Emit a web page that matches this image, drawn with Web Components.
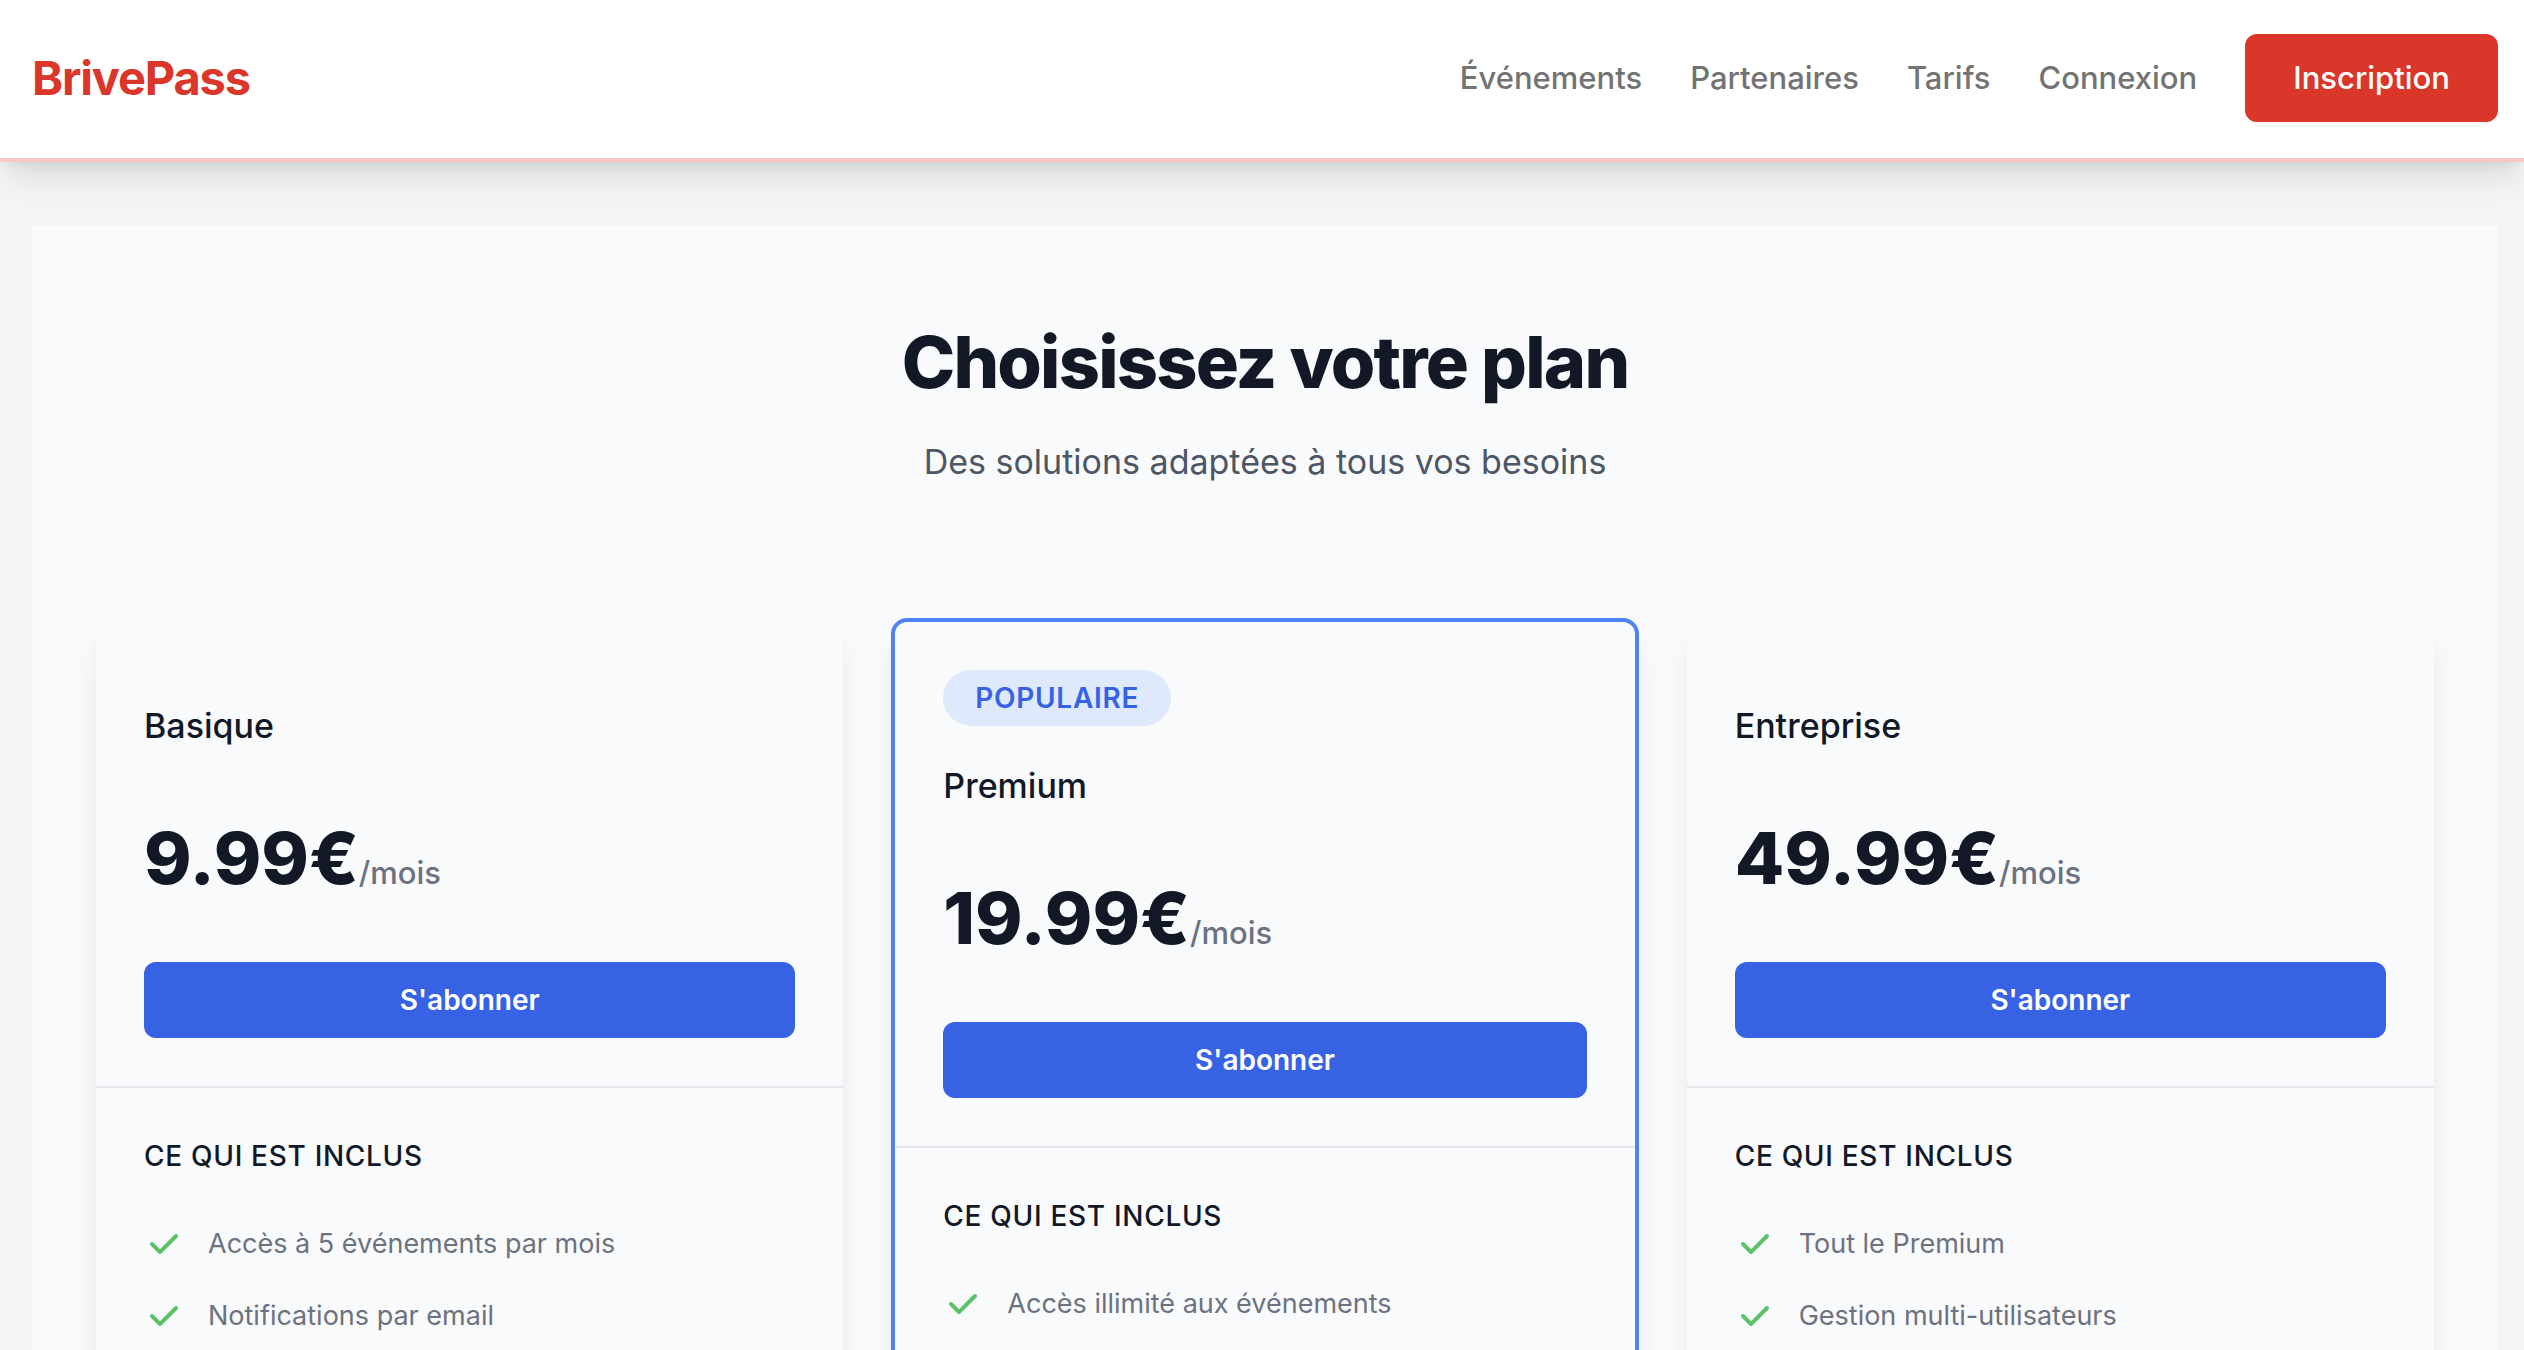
<!DOCTYPE html>
<html lang="fr">
<head>
<meta charset="utf-8">
<meta name="viewport" content="width=device-width, initial-scale=1">
<title>BrivePass – Tarifs</title>
<style>
  body {
    margin: 0;
    background: #f3f4f6;
    color: #121826;
    font-family: Inter, "Liberation Sans", sans-serif;
    font-size: 31px;
    line-height: 48px;
    -webkit-font-smoothing: antialiased;
  }
</style>
</head>
<body>
<bp-header>
  <bp-nav-link href="#evenements">Événements</bp-nav-link>
  <bp-nav-link href="#partenaires">Partenaires</bp-nav-link>
  <bp-nav-link href="#tarifs">Tarifs</bp-nav-link>
  <bp-nav-link href="#connexion">Connexion</bp-nav-link>
  <bp-nav-link href="#inscription" primary>Inscription</bp-nav-link>
</bp-header>
<bp-pricing>
  <span slot="title">Choisissez votre plan</span>
  <span slot="subtitle">Des solutions adaptées à tous vos besoins</span>
  <bp-plan name="Basique" price="9.99€">
    <bp-feature>Accès à 5 événements par mois</bp-feature>
    <bp-feature>Notifications par email</bp-feature>
  </bp-plan>
  <bp-plan name="Premium" price="19.99€" badge="POPULAIRE">
    <bp-feature>Accès illimité aux événements</bp-feature>
  </bp-plan>
  <bp-plan name="Entreprise" price="49.99€">
    <bp-feature>Tout le Premium</bp-feature>
    <bp-feature>Gestion multi-utilisateurs</bp-feature>
  </bp-plan>
</bp-pricing>

<script>
  class BpElement extends HTMLElement {
    constructor() {
      super();
      this.attachShadow({ mode: 'open' });
    }
    connectedCallback() {
      this.shadowRoot.innerHTML = this.render();
    }
  }

  customElements.define('bp-header', class extends BpElement {
    render() {
      return `
        <style>
          :host { display: block; position: relative; }
          header {
            display: flex; align-items: center; justify-content: space-between;
            padding: 34px 26px 36px 32px;
            background: #fff;
            border-bottom: 4px solid #fac5c6;
            box-shadow: 0 20px 30px -6px rgba(0,0,0,.1), 0 8px 12px -8px rgba(0,0,0,.1);
          }
          .logo {
            color: #da3629; font-size: 47px; line-height: 64px; font-weight: 700;
            letter-spacing: -0.025em; text-decoration: none;
          }
          nav { display: flex; align-items: center; gap: 48px; }
        </style>
        <header>
          <a class="logo" href="#accueil">BrivePass</a>
          <nav><slot></slot></nav>
        </header>`;
    }
  });

  customElements.define('bp-nav-link', class extends BpElement {
    render() {
      return `
        <style>
          :host { display: block; }
          a { display: block; color: #737373; font-weight: 500; text-decoration: none; }
          :host([primary]) a {
            padding: 20px 48px; border-radius: 12px;
            background: #da3629; color: #fff;
            box-shadow: 0 2px 4px rgba(0,0,0,.05);
          }
        </style>
        <a href="${this.getAttribute('href')}"><slot></slot></a>`;
    }
  });

  customElements.define('bp-pricing', class extends BpElement {
    render() {
      return `
        <style>
          :host { display: block; padding: 64px 26px 64px 32px; }
          main { padding: 96px 64px; background: #f9fafc; }
          .intro { text-align: center; }
          h1 {
            margin: 0; font-size: 72px; line-height: 80px; font-weight: 800;
            letter-spacing: -0.025em;
          }
          p { margin: 32px 0 0; color: #4d5664; font-size: 34px; line-height: 56px; }
          .plans {
            display: grid; grid-template-columns: repeat(3, minmax(0, 1fr));
            gap: 48px; margin-top: 128px;
          }
        </style>
        <main>
          <div class="intro">
            <h1><slot name="title"></slot></h1>
            <p><slot name="subtitle"></slot></p>
          </div>
          <div class="plans"><slot></slot></div>
        </main>`;
    }
  });

  customElements.define('bp-plan', class extends BpElement {
    render() {
      const badge = this.getAttribute('badge');
      return `
        <style>
          :host {
            display: block; border-radius: 16px;
            box-shadow: 0 20px 30px -6px rgba(0,0,0,.1), 0 8px 12px -8px rgba(0,0,0,.1);
            background: #f9fafc;
          }
          :host([badge]) { border: 4px solid #4f83f1; }
          .offer { padding: 48px; }
          .badge {
            display: inline-block; vertical-align: top; padding: 8px 32px;
            border-radius: 28px; background: #dee9fb; color: #3862e4;
            font-size: 28px; line-height: 40px; font-weight: 600; letter-spacing: 0.025em;
          }
          h2 { margin: 32px 0 0; font-size: 34px; line-height: 56px; font-weight: 500; }
          .price { display: flex; align-items: baseline; margin: 64px 0 0; line-height: 80px; }
          .amount { font-size: 72px; font-weight: 800; }
          .period { color: #6c7280; font-weight: 500; line-height: 48px; }
          button {
            display: block; width: 100%; margin-top: 64px; padding: 16px 32px;
            border: 2px solid transparent; border-radius: 12px;
            background: #3862e4 border-box; color: #fff; cursor: pointer;
            font: 600 28px/40px Inter, "Liberation Sans", sans-serif;
          }
          .included { padding: 48px; border-top: 2px solid #e5e7ea; }
          h3 {
            margin: 0; font-size: 28px; line-height: 40px; font-weight: 500;
            letter-spacing: 0.025em;
          }
          .features { display: flex; flex-direction: column; gap: 32px; margin-top: 48px; }
        </style>
        <div class="offer">
          ${badge ? `<span class="badge">${badge}</span>` : ''}
          <h2>${this.getAttribute('name')}</h2>
          <div class="price">
            <span class="amount">${this.getAttribute('price')}</span>
            <span class="period">/mois</span>
          </div>
          <button type="button">S'abonner</button>
        </div>
        <div class="included">
          <h3>CE QUI EST INCLUS</h3>
          <div class="features" role="list"><slot></slot></div>
        </div>`;
    }
  });

  customElements.define('bp-feature', class extends BpElement {
    connectedCallback() {
      this.setAttribute('role', 'listitem');
      super.connectedCallback();
    }
    render() {
      return `
        <style>
          :host {
            display: flex; align-items: flex-start; gap: 24px;
            color: #6c7280; font-size: 27px; line-height: 40px;
          }
          svg { flex: none; width: 40px; height: 40px; fill: #5bc267; }
        </style>
        <svg viewBox="0 0 20 20" aria-hidden="true">
          <path fill-rule="evenodd" clip-rule="evenodd" d="M16.707 5.293a1 1 0 010 1.414l-8 8a1 1 0 01-1.414 0l-4-4a1 1 0 011.414-1.414L8 12.586l7.293-7.293a1 1 0 011.414 0z"/>
        </svg>
        <span><slot></slot></span>`;
    }
  });
</script>
</body>
</html>
